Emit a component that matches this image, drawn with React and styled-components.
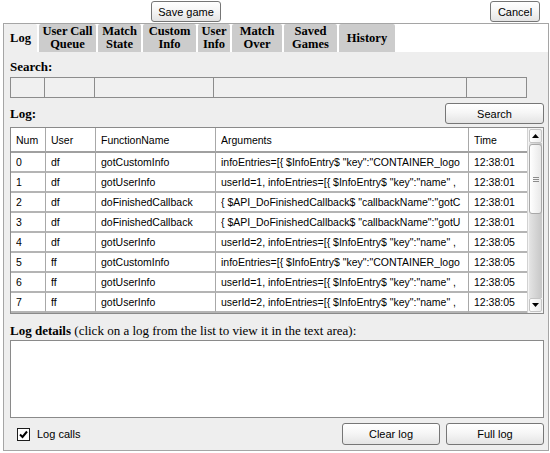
import React from 'react';
import styled, { createGlobalStyle } from 'styled-components';

const Global = createGlobalStyle`
  html, body { margin: 0; padding: 0; background: #ffffff; }
  body {
    width: 550px; height: 453px; overflow: hidden;
    font-family: "Liberation Sans", Arial, sans-serif;
    color: #000;
  }
  * { box-sizing: border-box; }
`;

const TopBar = styled.div`
  display: flex;
  align-items: center;
  height: 23px;
  padding: 0 10px 0 151px;
`;

const Button = styled.button`
  height: ${p => p.$h || 21}px;
  width: ${p => p.$w}px;
  margin-left: ${p => (p.$push ? 'auto' : '0')};
  padding: 0;
  border: 1px solid #767676;
  border-radius: 3px;
  background: linear-gradient(#ffffff, #f6f6f6 45%, #e4e4e4);
  font: 11px "Liberation Sans", Arial, sans-serif;
  color: #000;
`;

const Panel = styled.div`
  margin-left: 3px;
  width: 546px;
  border: 1px solid #a5a5a5;
`;

const TabStrip = styled.div`
  display: flex;
  gap: 2px;
  height: 28px;
  background: #ffffff;
`;

const Tab = styled.div`
  width: ${p => p.$w}px;
  display: flex;
  flex-direction: column;
  align-items: center;
  justify-content: center;
  text-align: center;
  background: ${p => (p.$active ? '#eeeeee' : '#cccccc')};
  border-radius: 2px 2px 0 0;
  font: bold 12.5px/13px "Liberation Serif", "Times New Roman", serif;
`;

const TabLine = styled.span`
  display: block;
  height: 13px;
  line-height: 13px;
  white-space: nowrap;
`;

const Content = styled.div`
  display: flex;
  flex-direction: column;
  background: #eeeeee;
  padding: 7px 4px 5px 6px;
`;

const Label = styled.div`
  font: bold 13px/15px "Liberation Serif", "Times New Roman", serif;
  margin-top: ${p => p.$mt || 0}px;
  white-space: nowrap;
`;

const Note = styled.span`
  font-weight: normal;
`;

const SearchRow = styled.div`
  display: flex;
  margin-top: 3px;
  height: 21px;
`;

const SearchCell = styled.div`
  width: ${p => p.$w}px;
  height: 21px;
  border: 1px solid #8c8c8c;
  background: #f0f0f0;
  & + & { margin-left: -1px; }
`;

const LogRow = styled.div`
  display: flex;
  align-items: center;
  justify-content: space-between;
  margin-top: 5px;
  height: 21px;
`;

const TableBox = styled.div`
  display: flex;
  margin-top: 3px;
  width: 534px;
  height: 187px;
  border: 1px solid #8a8a8a;
  background: #ffffff;
  overflow: hidden;
`;

const Table = styled.table`
  width: 516px;
  table-layout: fixed;
  border-collapse: separate;
  border-spacing: 0;
  align-self: flex-start;
`;

const Cell = styled.td`
  height: ${p => (p.$head ? 25 : 20)}px;
  padding: 0 4px 0 5px;
  font: 10.5px "Liberation Sans", Arial, sans-serif;
  font-weight: normal;
  text-align: left;
  border-right: 1px solid #a8a8a8;
  border-bottom: ${p => (p.$head ? '2px solid #a0a0a0' : '2px solid #b4b4b4')};
  &:last-child { border-right: 0; }
`;

const Clip = styled.span`
  display: block;
  overflow: hidden;
  white-space: nowrap;
`;

const Scrollbar = styled.div`
  width: 16px;
  display: flex;
  flex-direction: column;
  background: #f4f4f4;
  border-left: 1px solid #d2d2d2;
  padding: 1px 1px;
`;

const ArrowBtn = styled.div`
  height: 14px;
  display: flex;
  align-items: center;
  justify-content: center;
  border: 1px solid #c4c4c4;
  border-radius: 2px;
  background: linear-gradient(to right, #ffffff, #ececec);
`;

const Track = styled.div`
  flex: 1;
  display: flex;
  flex-direction: column;
  padding: 1px 0;
  background: linear-gradient(to right, #e4e4e4, #c6c6c6);
`;

const Thumb = styled.div`
  height: 70px;
  display: flex;
  align-items: center;
  justify-content: center;
  border: 1px solid #a8a8a8;
  border-radius: 3px;
  background: linear-gradient(to right, #ffffff, #e8e8e8);
`;

const TextArea = styled.textarea`
  display: block;
  margin-top: 2px;
  width: 534px;
  height: 78px;
  border: 1px solid #8a8a8a;
  background: #ffffff;
  resize: none;
  outline: none;
`;

const BottomRow = styled.div`
  display: flex;
  align-items: center;
  gap: 6px;
  margin-top: 5px;
  height: 22px;
  width: 534px;
`;

const CheckLabel = styled.label`
  display: flex;
  align-items: center;
  gap: 7px;
  margin-left: 7px;
  font: 11px "Liberation Sans", Arial, sans-serif;
`;

const CheckBox = styled.span`
  width: 13px;
  height: 13px;
  display: flex;
  align-items: center;
  justify-content: center;
  border: 1px solid #1c1c1c;
  background: #ffffff;
`;

const tabs = [
  { w: 33, label: ['Log'], active: true },
  { w: 57, label: ['User Call', 'Queue'] },
  { w: 43, label: ['Match', 'State'] },
  { w: 53, label: ['Custom', 'Info'] },
  { w: 32, label: ['User', 'Info'] },
  { w: 50, label: ['Match', 'Over'] },
  { w: 53, label: ['Saved', 'Games'] },
  { w: 56, label: ['History'] },
];

const searchCells = [35, 51, 120, 254, 61];
const cols = [35, 50, 120, 253, 58];
const headers = ['Num', 'User', 'FunctionName', 'Arguments', 'Time'];

const ciArgs = 'infoEntries=[{ $InfoEntry$ "key":"CONTAINER_logo';
const uiArgs1 = 'userId=1, infoEntries=[{ $InfoEntry$ "key":"name" ,';
const uiArgs2 = 'userId=2, infoEntries=[{ $InfoEntry$ "key":"name" ,';

const rows = [
  ['0', 'df', 'gotCustomInfo', ciArgs, '12:38:01'],
  ['1', 'df', 'gotUserInfo', uiArgs1, '12:38:01'],
  ['2', 'df', 'doFinishedCallback', '{ $API_DoFinishedCallback$ "callbackName":"gotC', '12:38:01'],
  ['3', 'df', 'doFinishedCallback', '{ $API_DoFinishedCallback$ "callbackName":"gotU', '12:38:01'],
  ['4', 'df', 'gotUserInfo', uiArgs2, '12:38:05'],
  ['5', 'ff', 'gotCustomInfo', ciArgs, '12:38:05'],
  ['6', 'ff', 'gotUserInfo', uiArgs1, '12:38:05'],
  ['7', 'ff', 'gotUserInfo', uiArgs2, '12:38:05'],
];

const Arrow = ({ down }) => (
  <svg width="7" height="4" viewBox="0 0 7 4">
    <polygon points={down ? '0,0 7,0 3.5,4' : '0,4 7,4 3.5,0'} fill="#000" />
  </svg>
);

const Grip = () => (
  <svg width="6" height="5" viewBox="0 0 6 5">
    <rect x="0" y="0" width="6" height="1" fill="#8c8c8c" />
    <rect x="0" y="2" width="6" height="1" fill="#8c8c8c" />
    <rect x="0" y="4" width="6" height="1" fill="#8c8c8c" />
  </svg>
);

export default function App() {
  return (
    <>
      <Global />
      <TopBar>
        <Button $w={70}>Save game</Button>
        <Button $w={50} $push>Cancel</Button>
      </TopBar>
      <Panel>
        <TabStrip>
          {tabs.map((t, i) => (
            <Tab key={i} $w={t.w} $active={t.active}>
              {t.label.map((l, j) => (
                <TabLine key={j}>{l}</TabLine>
              ))}
            </Tab>
          ))}
        </TabStrip>
        <Content>
          <Label>Search:</Label>
          <SearchRow>
            {searchCells.map((w, i) => (
              <SearchCell key={i} $w={w} />
            ))}
          </SearchRow>
          <LogRow>
            <Label>Log:</Label>
            <Button $w={99}>Search</Button>
          </LogRow>
          <TableBox>
            <Table>
              <colgroup>
                {cols.map((w, i) => (
                  <col key={i} style={{ width: w }} />
                ))}
              </colgroup>
              <thead>
                <tr>
                  {headers.map(h => (
                    <Cell as="th" key={h} $head>
                      <Clip>{h}</Clip>
                    </Cell>
                  ))}
                </tr>
              </thead>
              <tbody>
                {rows.map((r, i) => (
                  <tr key={i}>
                    {r.map((c, j) => (
                      <Cell key={j}><Clip>{c}</Clip></Cell>
                    ))}
                  </tr>
                ))}
              </tbody>
            </Table>
            <Scrollbar>
              <ArrowBtn><Arrow /></ArrowBtn>
              <Track>
                <Thumb><Grip /></Thumb>
              </Track>
              <ArrowBtn><Arrow down /></ArrowBtn>
            </Scrollbar>
          </TableBox>
          <Label $mt={9}>
            Log details <Note>(click on a log from the list to view it in the text area):</Note>
          </Label>
          <TextArea readOnly />
          <BottomRow>
            <CheckLabel>
              <CheckBox>
                <svg width="9" height="9" viewBox="0 0 9 9">
                  <path d="M1 4.5 L3.5 7 L8 1.5" stroke="#000" strokeWidth="2" fill="none" />
                </svg>
              </CheckBox>
              Log calls
            </CheckLabel>
            <Button $w={98} $h={22} $push>Clear log</Button>
            <Button $w={98} $h={22}>Full log</Button>
          </BottomRow>
        </Content>
      </Panel>
    </>
  );
}
